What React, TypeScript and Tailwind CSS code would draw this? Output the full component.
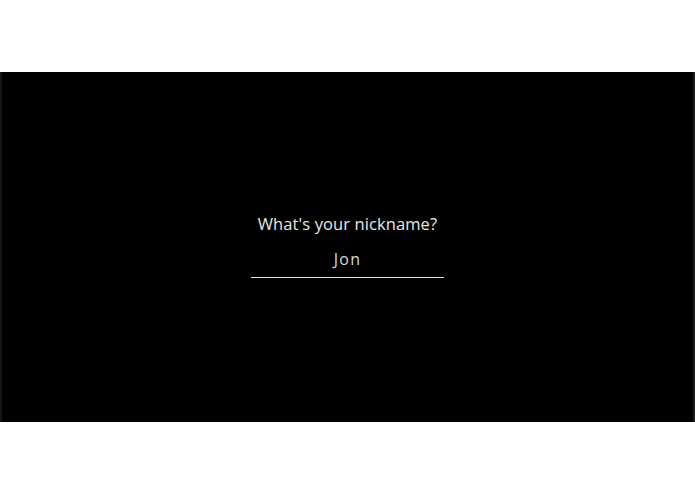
import React, { useState } from 'react';

export default function App() {
  const [nickname, setNickname] = useState('Jon');

  return (
    <div className="h-[494px] w-full bg-white flex flex-col" style={{ fontFamily: '"Open Sans", "Noto Sans", sans-serif' }}>
      <div className="h-[72px] shrink-0" />
      <div className="h-[350px] shrink-0 bg-black border-l-2 border-l-[#151515] border-r-2 border-r-[#1c1c1c] flex flex-col items-center justify-center">
        <h1 className="text-[16.5px] tracking-[0.1px] text-[#e8e8e8] font-normal leading-none">What's your nickname?</h1>
        <input
          type="text"
          value={nickname}
          onChange={(e) => setNickname(e.target.value)}
          className="mt-[16px] w-[193px] bg-transparent text-center text-[16px] tracking-[1.2px] text-[#d8d8d8] outline-none border-b border-b-[#e0e0e0] pb-[7px] leading-none"
        />
      </div>
    </div>
  );
}
